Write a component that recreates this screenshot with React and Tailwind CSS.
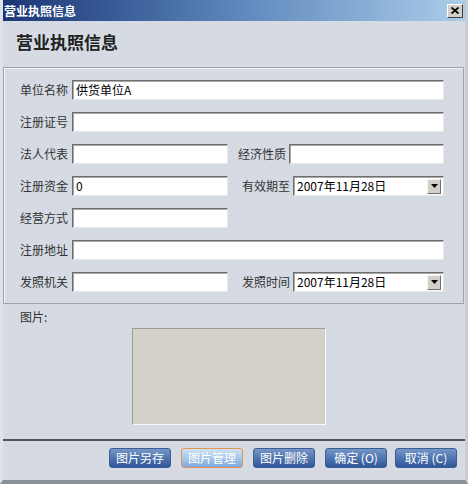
import React from "react";

const font = { fontFamily: '"Noto Sans CJK SC", "Liberation Sans", sans-serif' };

function Field({ value = "", className = "" }) {
  return (
    <div
      className={`h-[20px] bg-white border border-t-[#6e6e6e] border-l-[#6e6e6e] border-r-[#e6e6e6] border-b-[#e6e6e6] shadow-[inset_1px_1px_0_#a8a8a8] flex items-center pl-[3px] text-[12px] leading-[14px] text-black ${className}`}
    >
      {value}
    </div>
  );
}

function Combo({ value, className = "" }) {
  return (
    <div
      className={`h-[20px] bg-white border border-t-[#6e6e6e] border-l-[#6e6e6e] border-r-[#e6e6e6] border-b-[#e6e6e6] shadow-[inset_1px_1px_0_#a8a8a8] flex items-center pl-[3px] pr-[2px] text-[12px] leading-[14px] text-black ${className}`}
    >
      <span className="flex-1">{value}</span>
      <div className="w-[14px] h-[15px] bg-[#d4d0c8] border border-t-[#f4f4f4] border-l-[#f4f4f4] border-r-[#707070] border-b-[#707070] flex items-center justify-center">
        <svg width="7" height="4" viewBox="0 0 7 4">
          <polygon points="0,0 7,0 3.5,4" fill="#000" />
        </svg>
      </div>
    </div>
  );
}

function Label({ children, className = "" }) {
  return (
    <div className={`text-[12px] leading-[14px] text-[#333] whitespace-nowrap ${className}`}>
      {children}
    </div>
  );
}

function Btn({ children, active }) {
  return (
    <div
      className={
        active
          ? "h-[20px] w-[62px] rounded-[3px] border border-[#e39553] bg-gradient-to-b from-[#cfe3f6] to-[#7faadc] text-white text-[12px] leading-[14px] flex items-center justify-center"
          : "h-[20px] w-[62px] rounded-[3px] border border-[#3b5d92] bg-gradient-to-b from-[#7496c8] to-[#2e5699] text-white text-[12px] leading-[14px] flex items-center justify-center"
      }
    >
      {children}
    </div>
  );
}

export default function App() {
  return (
    <div
      style={font}
      className="w-[468px] h-[484px] bg-[#d6dbe3] flex flex-col border-l-[3px] border-l-[#dfe2e6] border-r-[3px] border-r-[#c9cdd3] border-b-[4px] border-b-[#8c9097]"
    >
      {/* title bar */}
      <div className="h-[21px] shrink-0 bg-gradient-to-r from-[#1b3674] via-[#5d86bb] to-[#abcdea] flex items-center justify-between pl-[1px] pr-[2px]">
        <span className="text-white font-bold text-[12px] leading-[14px]">营业执照信息</span>
        <div className="w-[16px] h-[14px] bg-[#d4d0c8] border border-t-[#ffffff] border-l-[#ffffff] border-r-[#404040] border-b-[#404040] flex items-center justify-center">
          <svg width="8" height="7" viewBox="0 0 8 7">
            <path d="M0.5 0.5 L7.5 6.5 M7.5 0.5 L0.5 6.5" stroke="#000" strokeWidth="1.8" />
          </svg>
        </div>
      </div>

      {/* heading */}
      <div className="h-[46px] shrink-0 pt-[11px] pl-[13px] text-[17px] leading-[20px] font-bold text-[#222]">
        营业执照信息
      </div>

      {/* form panel */}
      <div className="mr-[1px] border border-[#9ea3ab] shadow-[inset_1px_1px_0_#f2f4f6] pt-[12px] pb-[11px] pl-[16px] pr-[19px] flex flex-col gap-[12px]">
        <div className="flex items-center">
          <Label className="w-[52px]">单位名称</Label>
          <Field value="供货单位A" className="flex-1" />
        </div>
        <div className="flex items-center">
          <Label className="w-[52px]">注册证号</Label>
          <Field className="flex-1" />
        </div>
        <div className="flex items-center">
          <Label className="w-[52px]">法人代表</Label>
          <Field className="w-[156px]" />
          <Label className="w-[61px] text-right pr-[3px]">经济性质</Label>
          <Field className="flex-1" />
        </div>
        <div className="flex items-center">
          <Label className="w-[52px]">注册资金</Label>
          <Field value="0" className="w-[156px]" />
          <Label className="w-[65px] text-right pr-[3px]">有效期至</Label>
          <Combo value="2007年11月28日" className="flex-1" />
        </div>
        <div className="flex items-center">
          <Label className="w-[52px]">经营方式</Label>
          <Field className="w-[156px]" />
        </div>
        <div className="flex items-center">
          <Label className="w-[52px]">注册地址</Label>
          <Field className="flex-1" />
        </div>
        <div className="flex items-center">
          <Label className="w-[52px]">发照机关</Label>
          <Field className="w-[156px]" />
          <Label className="w-[65px] text-right pr-[3px]">发照时间</Label>
          <Combo value="2007年11月28日" className="flex-1" />
        </div>
      </div>

      {/* picture section */}
      <div className="h-[135px] shrink-0 flex flex-col pt-[6px]">
        <Label className="pl-[17px]">图片:</Label>
        <div className="ml-[129px] mt-[4px] w-[194px] h-[97px] bg-[#d4d1ca] border border-t-[#9c9c9c] border-l-[#9c9c9c] border-r-[#f8f8f8] border-b-[#f8f8f8]" />
      </div>

      {/* divider */}
      <div className="h-[2px] shrink-0 bg-[#4f555e]" />

      {/* buttons */}
      <div className="flex-1 flex items-start pt-[7px] pl-[106px] gap-[10px]">
        <Btn>图片另存</Btn>
        <Btn active>图片管理</Btn>
        <Btn>图片删除</Btn>
        <Btn>确定 (O)</Btn>
        <div className="-ml-[2px]">
          <Btn>取消 (C)</Btn>
        </div>
      </div>
    </div>
  );
}
